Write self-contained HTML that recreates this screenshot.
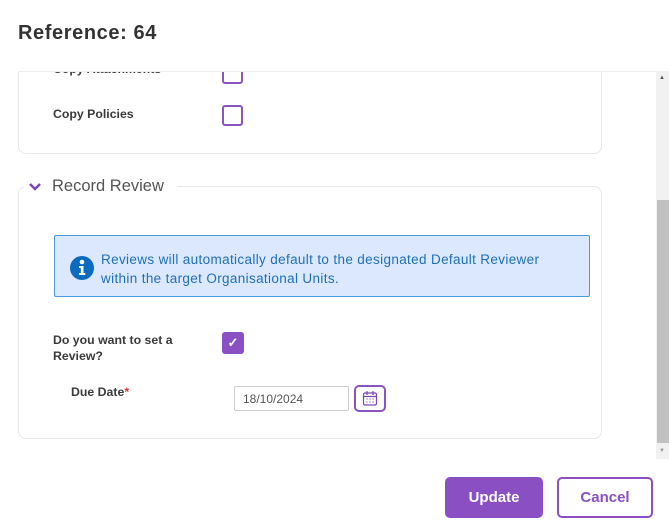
<!DOCTYPE html>
<html><head><style>
body{margin:0;width:669px;height:531px;background:#fff;font-family:"Liberation Sans",sans-serif;position:relative;overflow:hidden;color:#333}
.a{position:absolute}
.lbl{font-size:12.3px;font-weight:bold;color:#3a3a3a}
.cb{width:18px;height:18px;border:2px solid #8a54c0;border-radius:3px;box-sizing:border-box}
</style></head><body>
<div class="a" style="left:18px;top:22px;font-size:20px;font-weight:bold;color:#333;letter-spacing:0.6px">Reference: 64</div>
<div class="a" style="left:18px;top:71px;width:638px;height:1px;background:#eee"></div>
<div class="a" style="left:656px;top:71px;width:13px;height:388px;background:#f1f1f1"></div>
<div class="a" style="left:657px;top:200px;width:12px;height:243px;background:#c1c1c1"></div>
<div class="a" style="left:659px;top:75px;font-size:6px;color:#555">▲</div>
<div class="a" style="left:659px;top:448px;font-size:6px;color:#999">▼</div>
<div class="a" style="left:18px;top:50px;width:584px;height:104px;border:1px solid #e8e8e8;border-top:none;border-radius:0 0 8px 8px;box-sizing:border-box"></div>
<div class="a lbl" style="left:53px;top:62px">Copy Attachments</div>
<div class="a cb" style="left:222px;top:62px;width:21px;height:22px"></div>
<div class="a" style="left:0;top:50px;width:656px;height:21px;background:#fff"></div>
<div class="a" style="left:18px;top:71px;width:638px;height:1px;background:#eee"></div>
<div class="a lbl" style="left:53px;top:107px">Copy Policies</div>
<div class="a cb" style="left:222px;top:105px;width:21px;height:21px"></div>
<div class="a" style="left:18px;top:186px;width:584px;height:253px;border:1px solid #e8e8e8;border-radius:8px;box-sizing:border-box"></div>
<div class="a" style="left:24px;top:176px;width:153px;height:20px;background:#fff"></div>
<svg class="a" style="left:28px;top:182px" width="14" height="10"><path d="M2 2 L7 7 L12 2" stroke="#7d45b8" stroke-width="2.5" fill="none"/></svg>
<div class="a" style="left:52px;top:177px;font-size:16.5px;color:#555">Record Review</div>
<div class="a" style="left:54px;top:235px;width:536px;height:62px;background:#dbe8fd;border:1px solid #4a9ae0;border-radius:2px;box-sizing:border-box"></div>
<svg class="a" style="left:69px;top:255px" width="26" height="26"><circle cx="13" cy="13" r="12" fill="#0b6bc0"/><circle cx="13" cy="7" r="2.3" fill="#fff"/><path d="M10 11h4.5v7h1.8v2h-6.3v-2h1.8v-5h-1.8z" fill="#fff"/></svg>
<div class="a" style="left:101px;top:250px;font-size:13.5px;line-height:19px;color:#1f6fb8;letter-spacing:0.35px;white-space:nowrap">Reviews will automatically default to the designated Default Reviewer<br>within the target Organisational Units.</div>
<div class="a lbl" style="left:53px;top:332px;line-height:16px">Do you want to set a<br>Review?</div>
<div class="a" style="left:222px;top:332px;width:22px;height:22px;background:#8a4fc3;border-radius:3px;color:#fff;font-size:13px;font-weight:bold;text-align:center;line-height:22px">✓</div>
<div class="a lbl" style="left:71px;top:385px">Due Date<span style="color:#e0352b">*</span></div>
<div class="a" style="left:234px;top:386px;width:115px;height:25px;border:1px solid #ccc;border-radius:2px;box-sizing:border-box;font-size:12px;color:#555;padding:5px 8px">18/10/2024</div>
<div class="a" style="left:354px;top:385px;width:32px;height:27px;border:2px solid #8a54c0;border-radius:5px;box-sizing:border-box"></div>
<svg class="a" style="left:362px;top:390px" width="16" height="17"><rect x="1.5" y="3" width="13" height="12" rx="1.5" fill="none" stroke="#7d45b8" stroke-width="1.2"/><path d="M1.5 6.5h13M5 1v4M11 1v4" stroke="#7d45b8" stroke-width="1.2"/><path d="M4.5 9h1M7.5 9h1M10.5 9h1M4.5 12h1M7.5 12h1M10.5 12h1" stroke="#7d45b8" stroke-width="1.3"/></svg>
<div class="a" style="left:445px;top:477px;width:98px;height:41px;background:#8a4fc3;border-radius:5px;color:#fff;font-weight:bold;font-size:15px;text-align:center;line-height:41px">Update</div>
<div class="a" style="left:557px;top:477px;width:96px;height:41px;border:2px solid #8a4fc3;border-radius:5px;box-sizing:border-box;color:#8a4fc3;font-weight:bold;font-size:15px;text-align:center;line-height:37px">Cancel</div>
</body></html>
